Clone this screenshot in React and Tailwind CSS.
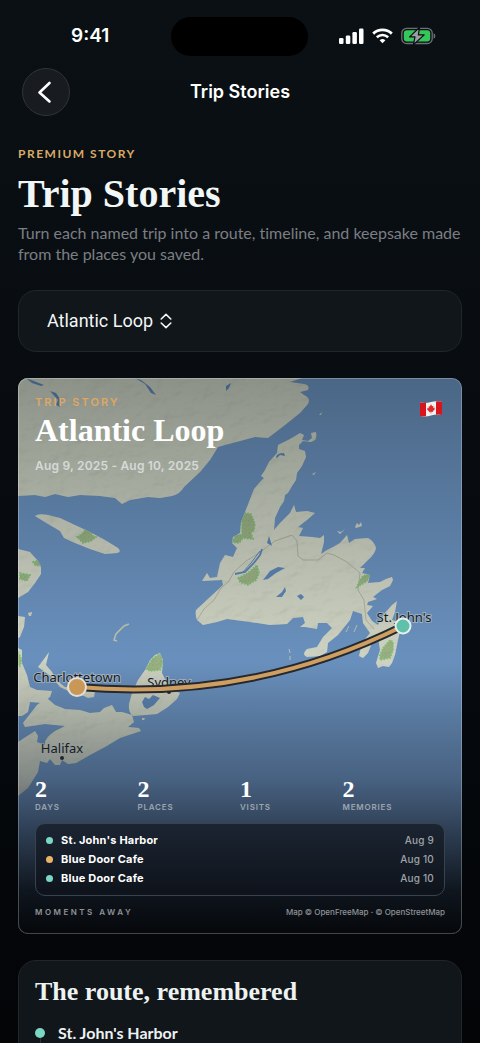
import React, { useState } from 'react';

const trips = ['Atlantic Loop'];

const stats = [
  { value: 2, label: 'DAYS' },
  { value: 2, label: 'PLACES' },
  { value: 1, label: 'VISITS' },
  { value: 2, label: 'MEMORIES' },
];

const stops = [
  { name: "St. John's Harbor", date: 'Aug 9', dot: 'bg-[#7bd6c3]' },
  { name: 'Blue Door Cafe', date: 'Aug 10', dot: 'bg-[#e9b469]' },
  { name: 'Blue Door Cafe', date: 'Aug 10', dot: 'bg-[#7bd6c3]' },
];

// Coastlines, all in the map's own coordinates
const land = [
  // Quebec and Labrador
  'M18 378V496L35 495L45 497L55 494L68 497L80 495L100 496L115 498L122 504L130 500L148 497L160 498L172 496Q180 494 184 487L200 472L210 460L218 447L225 445L240 441L255 437L268 438L285 425L300 413L308 404Q311 398 304 395L300 392L308 390Q310 385 304 384L290 382L302 378Z',
  // Anticosti
  'M35 516Q38 513 48 515L60 518L75 525L90 532L105 540L118 548Q122 552 117 553L105 554L90 549L75 543L64 538L60 531L48 524Z',
  // Newfoundland
  'M278 445L290 439L300 433L304 435L302 440L308 441L312 438L311 433L316 432Q317 438 315 440L311 442L303 441L299 445L299 449L305 451L306 457L302 466L297 473L296 480L292 486L288 493L285 495L284 501L280 507L275 518L274 530L280 523L290 513L294 505L296 512L307 511L315 513L307 520L298 527L303 528L299 536L312 537L320 538L324 535L324 542L321 554L327 550L333 547L340 543L347 535L349 543L355 539L368 538Q374 541 376 548Q375 554 368 560L360 568L365 568L362 573L370 575L368 583L380 582L386 579L392 577L393 580L390 586L382 590L373 597L377 599L368 602L367 605L373 606L367 613L372 621L378 625L385 613L392 605L397 601L395 612L392 620L402 623L398 640L395 655L392 663L389 667L383 666L378 668L376 663L380 650L378 637L372 643L368 653L363 658L359 656L362 643L370 633L363 623L362 614L353 611L350 620L346 625L338 635L328 643L327 652L320 656L307 657Q301 654 307 649L317 647L323 637L332 628L327 623L318 623L317 629L305 627L300 627L305 623L303 617L293 618L287 624L270 625L250 622L227 619L217 622L203 625L197 620Q195 615 196 610L210 597L223 585L222 580L202 581L207 573L210 578L217 577L220 563L225 555L233 557L237 548L232 543L233 537L240 533L241 522L247 507L254 489L260 482L264 478L261 476L265 470L269 462L277 453Z',
  // Cape Breton
  'M145 670L150 660L155 655L160 653L163 660L162 673L167 683L173 690L180 693L177 699L168 707L157 714L133 716Q128 712 129 704L132 693L138 680Z',
  // Prince Edward Island
  'M49 652L44 659L38 667L45 672L52 677L60 687L75 694L84 696L88 698L94 697L95 691L82 688L65 687L56 680L52 672L46 665Z',
  // New Brunswick
  'M18 648L22 650L22 663L27 675L30 687L37 690L52 691L50 697L42 703L30 702L28 712L22 716L18 716Z',
  // Nova Scotia
  'M37 705L47 698L55 705L65 709L80 710L90 713L100 712L104 708L112 705L116 712L122 712L132 715L134 722L128 727L139 728L141 731L120 738L105 747L90 755L76 763L68 764L62 760L60 765L55 765L50 759L47 763L40 761L38 772L28 788L18 796L18 742L35 731L38 736L37 742L45 745Q44 738 55 731L65 726L45 724L25 727L23 723Z',
  // Gaspe shore and small islands
  'M18 549L30 552L38 561L41 566L41 574L35 583L28 592L18 598Z',
  'M18 616L25 617L24 627L20 637L18 638Z',
  'M28 613L32 612L31 616L29 616Z',
  'M355 527L357 523L359 525L361 522L362 526L356 528Z',
  'M337 531L341 532L345 529L340 534Z',
  'M319 415L322 412L321 415Z',
  'M312 474L316 472L314 475Z',
  'M142 718L145 718L144 720L142 720Z',
];

const lakes = [
  'M26 378L44 385L41 386L32 383Z',
  'M50 391L56 393L60 399L60 407L56 405L58 400Z',
  'M135 378L141 380L150 387L156 395L151 393L145 384Z',
  'M226 386L231 383L229 388L226 391Z',
  'M276 457Q277 453 284 453L285 456L280 455L277 458Z',
  'M263 580L270 571L278 567L285 568L276 573L268 579Z',
  'M276 597L282 592L285 587L286 591L282 597Z',
  'M297 596L301 594L304 597L301 600Z',
  'M269 536L272 546L267 543Z',
  'M142 702L145 697L149 699L153 695L160 698L154 705L147 709L144 707Z',
];

const parks = [
  'M242 519L245 513L251 514L255 524L254 530L251 533L253 539L243 538L239 543L232 542L236 535L242 535Z',
  'M238 578L248 573L257 565L259 573L256 580L248 585L240 582Z',
  'M360 580L363 576L369 574L370 577L366 582L357 587Z',
  'M383 648L390 640L393 642L393 650L390 658L380 660L380 655Z',
  'M77 537L82 534L85 530L90 531L93 536L96 537L91 541L83 543Z',
  'M146 669L152 659L161 653L163 662L160 670L150 671Z',
  'M33 562L39 560L41 566L35 565Z',
  'M20 573L30 575L27 581L20 579Z',
  'M18 652L22 660L20 666L18 665Z',
];

const StoryMap = () => (
  <svg
    className="absolute inset-0 h-full w-full"
    viewBox="18 378 444 556"
    preserveAspectRatio="xMidYMid slice"
    aria-hidden="true"
  >
    <defs>
      <clipPath id="land-clip">
        {land.map((d) => (
          <path key={d} d={d} />
        ))}
      </clipPath>
      <filter id="relief" x="0" y="0" width="1" height="1">
        <feTurbulence type="fractalNoise" baseFrequency="0.05 0.07" numOctaves="3" seed="8" />
        <feDiffuseLighting surfaceScale="2" diffuseConstant="1.2" lightingColor="#ffffff">
          <feDistantLight azimuth="225" elevation="55" />
        </feDiffuseLighting>
      </filter>
      <linearGradient id="shade" x1="0" y1="0" x2="0" y2="1">
        <stop offset="0" stopColor="#11161a" stopOpacity="0.34" />
        <stop offset="0.5" stopColor="#11161a" stopOpacity="0" />
        <stop offset="0.51" stopColor="#11161a" stopOpacity="0" />
        <stop offset="0.72" stopColor="#1a2230" stopOpacity="0.42" />
        <stop offset="0.82" stopColor="#121923" stopOpacity="0.7" />
        <stop offset="0.92" stopColor="#090d13" stopOpacity="0.93" />
        <stop offset="1" stopColor="#05070a" stopOpacity="1" />
      </linearGradient>
      <pattern id="scrub" width="4" height="4" patternUnits="userSpaceOnUse">
        <rect width="4" height="4" fill="#9cb284" />
        <circle cx="1" cy="1" r="0.7" fill="#86ad72" />
        <circle cx="3" cy="3" r="0.6" fill="#8fb07b" />
      </pattern>
    </defs>

    <rect x="18" y="378" width="444" height="556" fill="#6990bd" />
    {land.map((d) => (
      <path key={d} d={d} fill="#bcc3ae" />
    ))}
    <path d="M129 624L124 626L116 634L114 640L117 641" fill="none" stroke="#b9c1ab" strokeWidth="1.6" />
    <path d="M349 626L346 632M357 625L354 632M289 649L290 653M290 656L290 660" stroke="#b9c1ab" strokeWidth="1" />
    <g clipPath="url(#land-clip)">
      {parks.map((d) => (
        <path key={d} d={d} fill="url(#scrub)" stroke="#7fc274" strokeWidth="1.8" strokeDasharray="1.5 1.5" />
      ))}
      <path
        d="M197 620L204 609L214 600L221 588L229 581L234 572L246 561L262 551L268 546L275 541L292 535L297 541L298 556L303 560L318 560L327 553L334 555L347 562L360 573L358 590L364 600L366 620L374 629"
        fill="none"
        stroke="#a0a28b"
        strokeWidth="0.7"
      />
      <rect x="18" y="378" width="444" height="556" filter="url(#relief)" className="opacity-25 mix-blend-multiply" />
    </g>
    {lakes.map((d) => (
      <path key={d} d={d} fill="#5c84b3" />
    ))}
    <path d="M235 574L245 572L253 564L260 555L262 549" fill="none" stroke="#5c84b3" strokeWidth="1.8" />
    <path d="M243 572L251 563L260 551" fill="none" stroke="#5c84b3" strokeWidth="1" />

    <g
      fontFamily="Noto Sans, sans-serif"
      fontSize="13"
      textAnchor="middle"
      fill="#17191b"
      stroke="#c9d1cf"
      strokeOpacity="0.6"
      strokeWidth="2"
      paintOrder="stroke"
    >
      <text x="77" y="682">Charlottetown</text>
      <text x="169" y="687">Sydney</text>
      <text x="62" y="753">Halifax</text>
      <text x="404" y="622">St. John's</text>
    </g>
    <circle cx="62" cy="758" r="2" fill="#25292c" />
    <circle cx="169" cy="692" r="2" fill="#25292c" />

    <rect x="18" y="378" width="444" height="556" fill="url(#shade)" />

    <path d="M77 687Q250 702 403 626" fill="none" stroke="#25292e" strokeWidth="8" />
    <path d="M77 687Q250 702 403 626" fill="none" stroke="#cf9f61" strokeWidth="4" />
    <circle cx="77" cy="687" r="9" fill="#c99856" stroke="#e3dfdc" strokeWidth="2" />
    <circle cx="403" cy="626" r="7.5" fill="#5fc0ac" stroke="#e6efee" strokeWidth="2" />
  </svg>
);

const CanadaFlag = () => (
  <svg className="h-4 w-[22px]" viewBox="0 0 22 16" role="img" aria-label="Canada">
    <path d="M0 1.5Q6 2.5 11 1T22 .8V14Q16 13 11 14.5T0 15Z" fill="#f4f1f0" />
    <path d="M0 1.5Q3 2.2 6 1.8V15.2Q3 15.6 0 15Z" fill="#d8141c" />
    <path d="M16 .4Q19 .1 22 .8V14Q19 13.4 16 13.7Z" fill="#d8141c" />
    <path
      d="M11 3.2L12.2 5.2L13.4 4.8L13.2 7L14.8 6.4L14.4 7.6L15 8L12.8 10.2L13 11L11.3 10.8V12.6H10.7V10.8L9 11.2L9.2 10.4L7 8.4L7.6 8L7.2 6.8L8.8 7.2L8.6 5.2L9.8 5.6Z"
      fill="#e02a26"
    />
  </svg>
);

const StatusBar = () => (
  <div className="grid grid-cols-3 items-center px-[22px] pt-4">
    <span className="pl-[49px] text-[19px] leading-10 font-semibold">9:41</span>
    <div className="h-[39px] w-[137px] justify-self-center rounded-full bg-black" />
    <div className="flex items-center justify-end gap-2 pr-[22px]">
      <svg className="h-4 w-[25px]" viewBox="0 0 25 16" fill="#ffffff" aria-hidden="true">
        <rect x="0" y="10" width="4.5" height="6" rx="1.3" />
        <rect x="6.8" y="7.5" width="4.5" height="8.5" rx="1.3" />
        <rect x="13.4" y="4" width="4.5" height="12" rx="1.3" />
        <rect x="20" y="0.5" width="4.5" height="15.5" rx="1.3" />
      </svg>
      <svg className="h-4 w-[21px]" viewBox="0 0 21 16" fill="none" stroke="#ffffff" aria-hidden="true">
        <path d="M1.2 5.6Q5.2 1.9 10.5 1.9T19.8 5.6" strokeWidth="2.8" />
        <path d="M4.8 9.2Q7.4 7 10.5 7T16.2 9.2" strokeWidth="2.6" />
        <path d="M10.5 15.2L7.6 12.2Q10.5 9.8 13.4 12.2Z" fill="#ffffff" stroke="none" />
      </svg>
      <svg className="h-[18px] w-[35px]" viewBox="0 0 35 18" aria-hidden="true">
        <rect x="0.8" y="1.3" width="30.4" height="15.2" rx="4.8" fill="none" stroke="#6d7073" strokeWidth="1.3" />
        <path d="M32.6 6.2Q34.4 7 34.4 9T32.6 11.8Z" fill="#6d7073" />
        <rect x="2.8" y="3.2" width="26.4" height="11.4" rx="3" fill="#34c85a" />
        <path
          d="M18.6 0.2L8.6 9.9H14L12.4 17.8L23.2 7.9H17.4Z"
          fill="#9a9da1"
          stroke="#0b0f13"
          strokeWidth="1.2"
          strokeLinejoin="round"
        />
      </svg>
    </div>
  </div>
);

const App = () => {
  const [trip, setTrip] = useState(trips[0]);

  return (
    <div className="h-dvh overflow-y-auto bg-linear-to-b from-[#0b1014] via-[#070b10] to-[#030507] font-['Inter',sans-serif] text-white [scrollbar-width:none]">
      <StatusBar />

      <header className="mt-3 grid grid-cols-[48px_1fr_48px] items-center px-[22px]">
        <button
          type="button"
          aria-label="Back"
          className="flex size-12 items-center justify-center rounded-full border border-[#30343a] bg-[#181c21]"
        >
          <svg className="size-6" viewBox="0 0 24 24" fill="none" stroke="#ffffff" strokeWidth="2.6" strokeLinecap="round" strokeLinejoin="round">
            <path d="M15.5 3L5.5 12.5L15.5 21.5" />
          </svg>
        </button>
        <span className="text-center text-lg font-semibold">Trip Stories</span>
      </header>

      <main className="px-[18px] pb-8">
        <p className="mt-[30px] font-['Lato',sans-serif] text-xs font-bold tracking-[1.5px] text-[#d9aa68]">
          PREMIUM STORY
        </p>
        <h1 className="mt-2 font-['Liberation_Serif',serif] text-[40px] leading-12 font-bold text-[#f1f6f6]">Trip Stories</h1>
        <p className="mt-1 font-['Lato',sans-serif] text-base leading-[21px] text-[#7b7f83] [font-variant-ligatures:none]">
          Turn each named trip into a route, timeline, and keepsake made from the places you saved.
        </p>

        <div className="mt-[26px] flex h-[62px] items-center rounded-[18px] border border-[#21262b] bg-[#11161a] px-7">
          <div className="relative">
            <select
              aria-label="Trip"
              value={trip}
              onChange={(e) => setTrip(e.target.value)}
              className="h-10 appearance-none bg-transparent pr-[18px] font-['Roboto',sans-serif] text-lg leading-10 text-[#f3f5f6] outline-none"
            >
              {trips.map((name) => (
                <option key={name}>{name}</option>
              ))}
            </select>
            <svg
              className="pointer-events-none absolute inset-y-0 right-0 my-auto h-4 w-3"
              viewBox="0 0 12 16"
              fill="none"
              stroke="#f3f5f6"
              strokeWidth="1.6"
              strokeLinecap="round"
              strokeLinejoin="round"
            >
              <path d="M1.2 6L6 1.4L10.8 6M1.2 10L6 14.6L10.8 10" />
            </svg>
          </div>
        </div>

        <section className="relative mt-[26px] flex aspect-[444/556] flex-col justify-between overflow-hidden rounded-[10px] px-[17px] pt-4 pb-4">
          <StoryMap />
          <div className="relative flex items-start justify-between">
            <div>
              <p className="text-[11px] leading-4 font-semibold tracking-[2px] text-[#dda766]">TRIP STORY</p>
              <h2 className="mt-[2px] font-['Liberation_Serif',serif] text-[32px] leading-9 font-bold">{trip}</h2>
              <p className="mt-2 text-xs leading-5 font-semibold tracking-[0.2px] text-[#d5dad8]">
                Aug 9, 2025 - Aug 10, 2025
              </p>
            </div>
            <div className="pt-[7px] pr-[3px]">
              <CanadaFlag />
            </div>
          </div>

          <div className="relative">
            <dl className="grid grid-cols-4">
              {stats.map((stat) => (
                <div key={stat.label} className="flex flex-col-reverse">
                  <dt className="text-[8px] leading-3 font-semibold tracking-[0.8px] text-[#9ca5b0]">{stat.label}</dt>
                  <dd className="font-['Liberation_Serif',serif] text-2xl leading-6 font-bold">{stat.value}</dd>
                </div>
              ))}
            </dl>
            <ul className="mt-[10px] rounded-[10px] border border-[#39434e] bg-[#0f141b]/65 px-[10px] py-[7px]">
              {stops.map((stop, i) => (
                <li key={i} className="flex h-[19px] items-center text-[11px] tracking-[0.2px]">
                  <span className={`size-[7px] rounded-full ${stop.dot}`} />
                  <span className="ml-2 font-bold">{stop.name}</span>
                  <span className="ml-auto text-[10px] font-medium text-[#9fa3a8]">{stop.date}</span>
                </li>
              ))}
            </ul>
            <div className="mt-[10px] flex items-center justify-between text-[8px] leading-3 text-[#8f9397]">
              <span className="font-semibold tracking-[2.5px]">MOMENTS AWAY</span>
              <span className="font-medium">Map © OpenFreeMap · © OpenStreetMap</span>
            </div>
          </div>
          <div className="pointer-events-none absolute inset-0 rounded-[10px] border border-white/25" />
        </section>

        <section className="mt-[26px] rounded-[18px] border border-[#21262b] bg-[#11161a] px-4 pt-4 pb-5">
          <h2 className="font-['Liberation_Serif',serif] text-[26px] leading-[30px] font-bold text-[#edf2f2]">
            The route, remembered
          </h2>
          <div className="mt-3 flex gap-[13px]">
            <div className="flex flex-col items-center pt-[9px]">
              <span className="size-[10px] rounded-full bg-[#7bd6c3]" />
              <span className="h-10 w-px bg-[#2c3237]" />
            </div>
            <p className="font-['Lato',sans-serif] text-base leading-7 font-bold text-[#edf2f2]">{stops[0].name}</p>
          </div>
        </section>
      </main>
    </div>
  );
};

export default App;
